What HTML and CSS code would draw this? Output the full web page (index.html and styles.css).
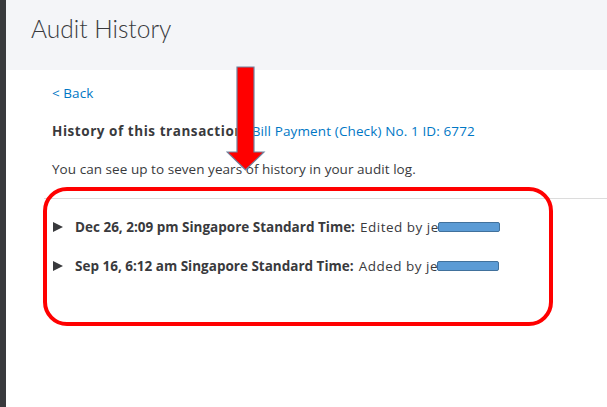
FILE: index.html
```html
<!DOCTYPE html>
<html>
<head>
<meta charset="utf-8">
<link rel="stylesheet" href="styles.css">
</head>
<body>
<div class="app">
  <div class="rail"></div>
  <div class="main">
    <header class="header"><h1 class="title">Audit History</h1></header>
    <section class="content">
      <a class="back">&lt; Back</a>
      <p class="history"><b>History of this transaction:</b> <a class="link">Bill Payment (Check) No. 1 ID: 6772</a></p>
      <p class="desc">You can see up to seven years of history in your audit log.</p>
      <ul class="log">
        <li class="entry"><span class="tri"></span><b>Dec 26, 2:09 pm Singapore Standard Time:</b><span class="who">Edited by je</span><span class="redact"></span></li>
        <li class="entry"><span class="tri"></span><b>Sep 16, 6:12 am Singapore Standard Time:</b><span class="who">Added by je</span><span class="redact"></span></li>
      </ul>
    </section>
    <div class="callout"></div>
    <svg class="arrow" width="40" height="110" viewBox="0 0 40 110">
      <path d="M11 1 H28 V86 H38 L19.5 104 L1 86 H11 Z" fill="#ff0000" stroke="#6f84a0" stroke-width="1.2"/>
    </svg>
  </div>
</div>
</body>
</html>
```
FILE: styles.css
```css
* { box-sizing: border-box; }
html, body { margin: 0; padding: 0; background: #fff; }
body {
  font-family: "Open Sans", "Liberation Sans", sans-serif;
  color: #393a3d;
  width: 607px;
  height: 407px;
  overflow: hidden;
}
.app { display: flex; height: 407px; }
.rail { width: 6px; background: #393a3d; flex: none; }
.main { flex: 1; position: relative; }
.header {
  height: 70px;
  background: #f4f5f8;
  padding: 12px 0 0 25px;
}
.title {
  margin: 0;
  font-family: "Lato", sans-serif;
  font-weight: 300;
  font-size: 24.5px;
  line-height: 34px;
  color: #393a3d;
}
.content { padding: 14px 0 0 46px; font-size: 13.5px; line-height: 18px; letter-spacing: 0.05px; }
.back { display: block; color: #0077c5; }
.history { margin: 20px 0 0; }
.history b { font-weight: 700; letter-spacing: 0.55px; }
.link { color: #0077c5; letter-spacing: 0.12px; }
.desc { margin: 20px 0 0; }
.log {
  list-style: none;
  margin: 20px 0 0 -8px;
  padding: 19px 0 0 8px;
  border-top: 1px solid #dcdcdc;
}
.entry { display: flex; align-items: center; height: 18px; margin-bottom: 21px; white-space: nowrap; font-size: 13.5px; }
.tri {
  width: 0;
  height: 0;
  border-left: 10px solid #393a3d;
  border-top: 5px solid transparent;
  border-bottom: 5px solid transparent;
  margin: 0 12px 0 1px;
}
.entry b { font-weight: 700; letter-spacing: 0; }
.who { margin-left: 5px; letter-spacing: 0.5px; }
.redact {
  display: inline-block;
  width: 62px;
  height: 10px;
  background: #5b9bd5;
  border: 1px solid #41719c;
  border-radius: 2px;
  margin-left: -1px;
}
.callout {
  position: absolute;
  left: 37px;
  top: 187px;
  width: 510px;
  height: 139px;
  border: 4px solid #ff0000;
  border-radius: 24px;
}
.arrow { position: absolute; left: 220px; top: 66px; }
```
